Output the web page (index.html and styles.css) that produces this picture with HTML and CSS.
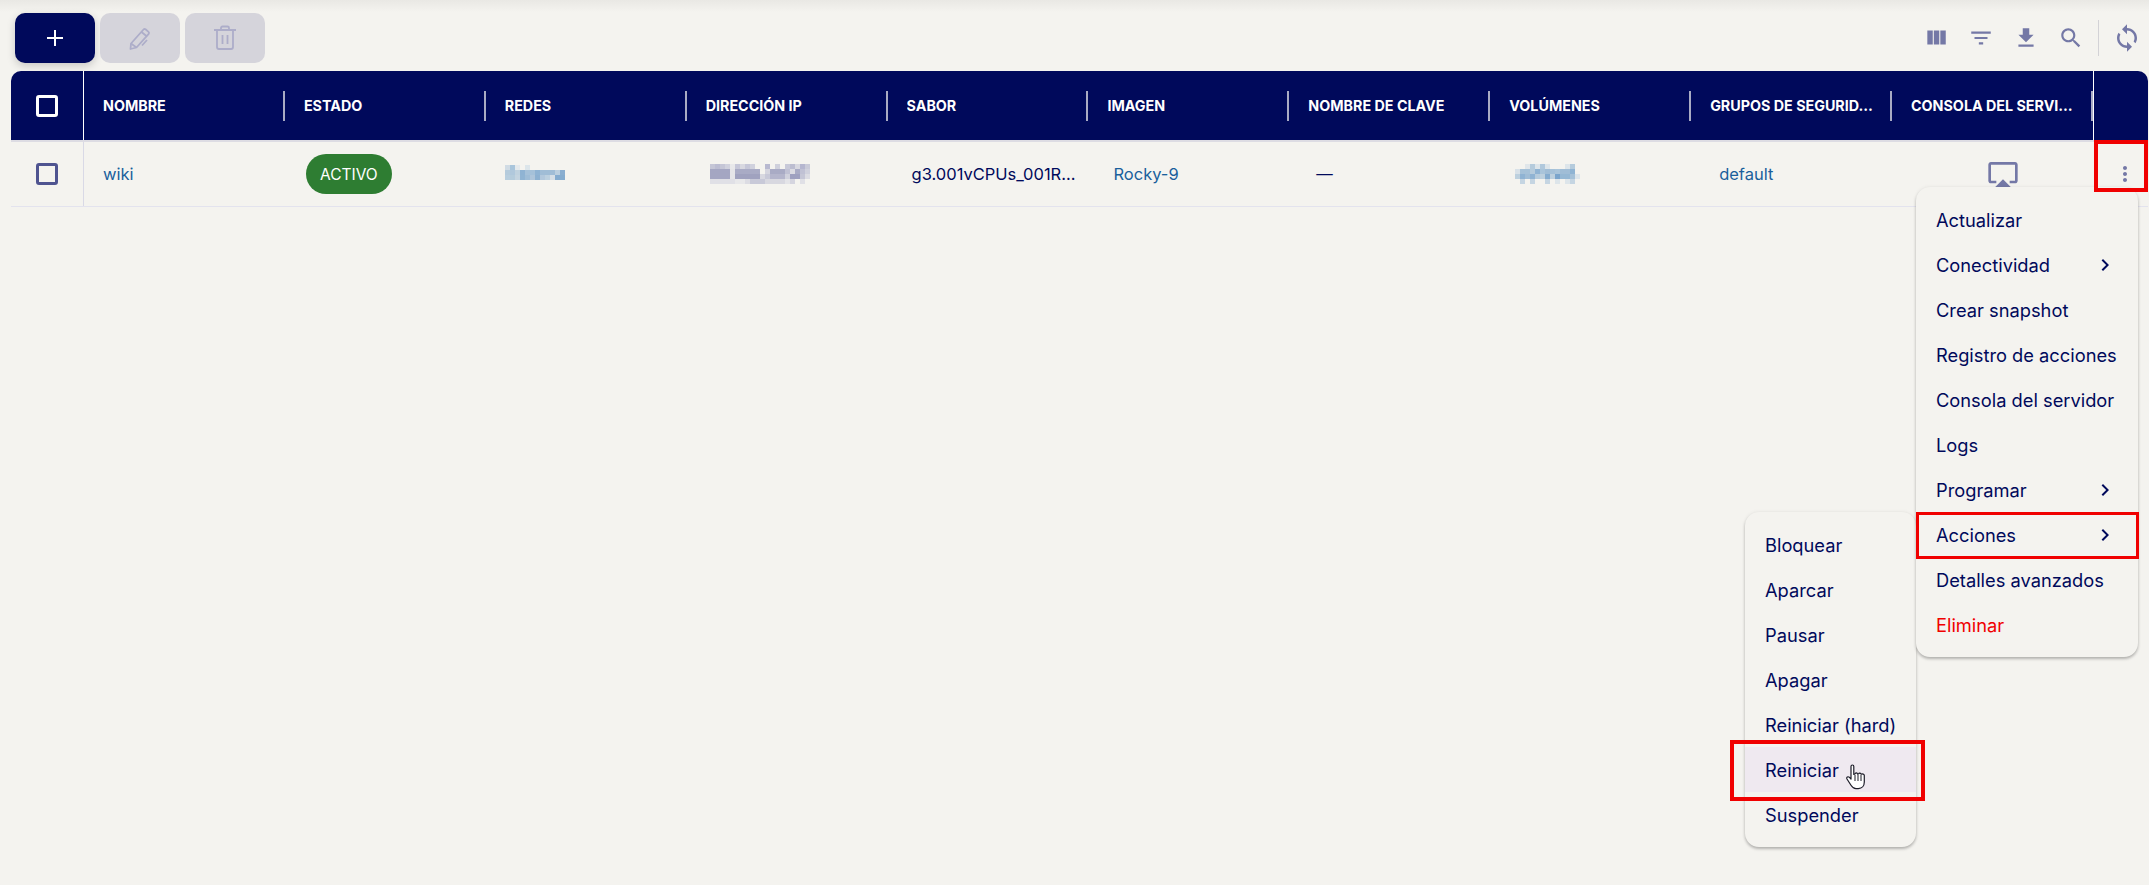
FILE: index.html
```html
<!DOCTYPE html>
<html lang="es">
<head>
  <meta charset="UTF-8">
  <meta name="viewport" content="width=device-width, initial-scale=1.0">
  <title>Instancias</title>
  <link rel="stylesheet" href="styles.css">
</head>
<body>
  <!-- Barra de acciones -->
  <div class="toolbar">
    <div class="toolbar-left">
      <button class="btn btn-primary">
        <svg width="24" height="24" viewBox="0 0 24 24"><path d="M12 4v16M4 12h16" stroke="#fff" stroke-width="2" fill="none"/></svg>
      </button>
      <button class="btn btn-disabled">
        <svg width="26" height="26" viewBox="0 0 26 26" fill="none" stroke="#adadc9" stroke-width="1.8" stroke-linejoin="round"><path d="M4 18.5 16.5 4.5a1.5 1.5 0 0 1 2-.2l3 2.6a1.5 1.5 0 0 1 .2 2L9.5 22.5 3.5 24z"/><path d="M4 18.5l5.5 4M14.5 7l5.500 4.500M15 20.500l5-5.500"/></svg>
      </button>
      <button class="btn btn-disabled">
        <svg width="26" height="26" viewBox="0 0 26 26" fill="none" stroke="#adadc9" stroke-width="1.8"><path d="M2 5h22M5 5v17a2 2 0 0 0 2 2h12a2 2 0 0 0 2-2V5M9 5V3a1.500 1.500 0 0 1 1.500-1.500h5A1.500 1.500 0 0 1 17 3v2M10.500 10v9M15.500 10v9"/></svg>
      </button>
    </div>
    <div class="toolbar-right">
      <svg class="tool tool-item" width="26" height="26" viewBox="0 0 24 24"><path d="M10 18h5V5h-5v13zm-6 0h5V5H4v13zM16 5v13h5V5h-5z"/></svg>
      <svg class="tool tool-item" width="26" height="26" viewBox="0 0 24 24"><path d="M10 18h4v-2h-4v2zM3 6v2h18V6H3zm3 7h12v-2H6v2z"/></svg>
      <svg class="tool tool-item" width="26" height="26" viewBox="0 0 24 24"><path d="M19 9h-4V3H9v6H5l7 7 7-7zM5 18v2h14v-2H5z"/></svg>
      <svg class="tool" width="26" height="26" viewBox="0 0 24 24"><path d="M15.500 14h-.79l-.28-.27C15.410 12.590 16 11.110 16 9.500 16 5.910 13.090 3 9.500 3S3 5.910 3 9.500 5.910 16 9.500 16c1.610 0 3.090-.59 4.230-1.570l.27.28v.79l5 4.990L20.490 19l-4.990-5zm-6 0C7.010 14 5 11.990 5 9.500S7.010 5 9.500 5 14 7.010 14 9.500 11.990 14 9.500 14z"/></svg>
      <span class="tool-divider"></span>
      <svg class="tool" width="30" height="30" viewBox="0 0 24 24"><path d="M12 4V1L8 5l4 4V6c3.310 0 6 2.690 6 6 0 1.010-.25 1.970-.7 2.800l1.460 1.460C19.540 15.030 20 13.570 20 12c0-4.420-3.580-8-8-8zm0 14c-3.310 0-6-2.690-6-6 0-1.010.25-1.970.7-2.800L5.240 7.740C4.460 8.970 4 10.430 4 12c0 4.420 3.580 8 8 8v3l4-4-4-4v3z"/></svg>
    </div>
  </div>

  <!-- Tabla -->
  <div class="table">
    <div class="row row-head">
      <div class="cell cell-check"><span class="checkbox checkbox-head"></span></div>
      <div class="cell"><span class="label">Nombre</span><span class="sep"></span></div>
      <div class="cell"><span class="label">Estado</span><span class="sep"></span></div>
      <div class="cell"><span class="label">Redes</span><span class="sep"></span></div>
      <div class="cell"><span class="label">Dirección IP</span><span class="sep"></span></div>
      <div class="cell"><span class="label">Sabor</span><span class="sep"></span></div>
      <div class="cell"><span class="label">Imagen</span><span class="sep"></span></div>
      <div class="cell"><span class="label">Nombre de clave</span><span class="sep"></span></div>
      <div class="cell"><span class="label">Volúmenes</span><span class="sep"></span></div>
      <div class="cell"><span class="label">Grupos de seguridad</span><span class="sep"></span></div>
      <div class="cell"><span class="label">Consola del servidor</span><span class="sep"></span></div>
      <div class="cell cell-actions"></div>
    </div>
    <div class="row row-body">
      <div class="cell cell-check"><span class="checkbox"></span></div>
      <div class="cell cell-name"><a href="#">wiki</a></div>
      <div class="cell cell-state"><span class="chip">ACTIVO</span></div>
      <!-- datos difuminados en la captura -->
      <div class="cell cell-net">
        <svg width="60" height="20" viewBox="0 0 60 20" shape-rendering="crispEdges">
          <rect x="0" y="1" width="5" height="5" fill="#d0dbe4"/><rect x="5" y="1" width="5" height="5" fill="#a9c5db"/><rect x="10" y="1" width="5" height="5" fill="#e4e9ec"/><rect x="20" y="1" width="5" height="5" fill="#dce5ea"/>
          <rect x="0" y="6" width="5" height="5" fill="#b5cbdc"/><rect x="5" y="6" width="5" height="5" fill="#b0c8dc"/><rect x="10" y="6" width="5" height="5" fill="#c0d2df"/><rect x="15" y="6" width="5" height="5" fill="#8fb3d3"/><rect x="20" y="6" width="10" height="5" fill="#a5c1d9"/><rect x="30" y="6" width="5" height="5" fill="#8fb3d3"/><rect x="35" y="6" width="15" height="5" fill="#a0bdd6"/><rect x="50" y="6" width="5" height="5" fill="#bbcfdf"/><rect x="55" y="6" width="5" height="5" fill="#8aaed0"/>
          <rect x="0" y="11" width="5" height="5" fill="#b8cede"/><rect x="5" y="11" width="5" height="5" fill="#b5ccdc"/><rect x="10" y="11" width="5" height="5" fill="#c4d4e0"/><rect x="15" y="11" width="5" height="5" fill="#90b4d3"/><rect x="20" y="11" width="5" height="5" fill="#9fbdd7"/><rect x="25" y="11" width="5" height="5" fill="#aec5da"/><rect x="30" y="11" width="5" height="5" fill="#8db1d1"/><rect x="35" y="11" width="5" height="5" fill="#b2c8dc"/><rect x="40" y="11" width="5" height="5" fill="#bcd0df"/><rect x="45" y="11" width="5" height="5" fill="#d6dfe6"/><rect x="50" y="11" width="10" height="5" fill="#85accf"/>
        </svg>
      </div>
      <div class="cell cell-ip">
        <svg width="100" height="20" viewBox="0 0 100 20" shape-rendering="crispEdges">
          <rect x="0" y="0" width="5" height="5" fill="#c5c6d6"/><rect x="5" y="0" width="5" height="5" fill="#bcbdd2"/><rect x="10" y="0" width="5" height="5" fill="#c5c6d6"/><rect x="15" y="0" width="5" height="5" fill="#d0d1dd"/><rect x="20" y="0" width="5" height="5" fill="#e8e8ea"/><rect x="25" y="0" width="5" height="5" fill="#c6c7d8"/><rect x="30" y="0" width="5" height="5" fill="#d8d8e0"/><rect x="35" y="0" width="5" height="5" fill="#c6c7d8"/><rect x="40" y="0" width="5" height="5" fill="#d0d1dd"/><rect x="55" y="0" width="5" height="5" fill="#b8b9d0"/><rect x="65" y="0" width="5" height="5" fill="#cfd0dc"/><rect x="75" y="0" width="5" height="5" fill="#c8c9d8"/><rect x="80" y="0" width="5" height="5" fill="#bcbdd0"/><rect x="85" y="0" width="5" height="5" fill="#d8d8e0"/><rect x="90" y="0" width="5" height="5" fill="#b5b6cf"/><rect x="95" y="0" width="5" height="5" fill="#c9cad8"/>
          <rect x="0" y="5" width="20" height="10" fill="#a4a6c2"/><rect x="20" y="5" width="5" height="10" fill="#e5e5e8"/><rect x="25" y="5" width="25" height="5" fill="#a9abc5"/><rect x="25" y="10" width="25" height="5" fill="#a0a2bf"/><rect x="55" y="5" width="5" height="5" fill="#d5d5df"/><rect x="60" y="5" width="15" height="5" fill="#a9abc5"/><rect x="75" y="5" width="5" height="5" fill="#c0c1d4"/><rect x="80" y="5" width="5" height="5" fill="#dcdce3"/><rect x="85" y="5" width="5" height="5" fill="#a9abc5"/><rect x="90" y="5" width="5" height="5" fill="#c0c1d4"/><rect x="95" y="5" width="5" height="5" fill="#d0d1dd"/>
          <rect x="50" y="10" width="5" height="5" fill="#d8d8e0"/><rect x="55" y="10" width="5" height="5" fill="#c8c9d8"/><rect x="60" y="10" width="15" height="5" fill="#b4b5cc"/><rect x="75" y="10" width="5" height="5" fill="#d0d1dd"/><rect x="80" y="10" width="10" height="5" fill="#9fa1c0"/><rect x="90" y="10" width="5" height="5" fill="#c5c6d6"/><rect x="95" y="10" width="5" height="5" fill="#dcdce3"/>
          <rect x="0" y="15" width="25" height="5" fill="#e0e0e6"/><rect x="25" y="15" width="10" height="5" fill="#e8e8ea"/><rect x="35" y="15" width="5" height="5" fill="#dcdce3"/><rect x="40" y="15" width="15" height="5" fill="#c8c9d8"/><rect x="55" y="15" width="20" height="5" fill="#d8d8e0"/><rect x="75" y="15" width="5" height="5" fill="#e4e4e8"/><rect x="80" y="15" width="5" height="5" fill="#d5d5df"/><rect x="90" y="15" width="5" height="5" fill="#e0e0e6"/>
        </svg>
      </div>
      <div class="cell"><span class="text">g3.001vCPUs_001R...</span></div>
      <div class="cell cell-link"><a href="#">Rocky-9</a></div>
      <div class="cell cell-dash"><span class="text">—</span></div>
      <div class="cell cell-vol">
        <svg width="65" height="20" viewBox="0 0 65 20" shape-rendering="crispEdges">
          <rect x="10" y="0" width="5" height="5" fill="#e0e6ea"/><rect x="15" y="0" width="5" height="5" fill="#b5cbdc"/><rect x="20" y="0" width="5" height="5" fill="#dde5ea"/><rect x="25" y="0" width="5" height="5" fill="#b0c8dc"/><rect x="30" y="0" width="5" height="5" fill="#dde5ea"/><rect x="50" y="0" width="5" height="5" fill="#dde5ea"/><rect x="55" y="0" width="5" height="5" fill="#b5cbdc"/>
          <rect x="0" y="5" width="5" height="5" fill="#d8e1e8"/><rect x="5" y="5" width="10" height="5" fill="#a5c1d8"/><rect x="15" y="5" width="5" height="5" fill="#b5cbdc"/><rect x="20" y="5" width="5" height="5" fill="#8fb3d3"/><rect x="25" y="5" width="5" height="5" fill="#a9c4da"/><rect x="30" y="5" width="5" height="5" fill="#a0bdd6"/><rect x="35" y="5" width="5" height="5" fill="#a5c1d8"/><rect x="40" y="5" width="5" height="5" fill="#a9c4da"/><rect x="45" y="5" width="10" height="5" fill="#a0bdd6"/><rect x="55" y="5" width="5" height="5" fill="#90b4d3"/>
          <rect x="0" y="10" width="5" height="5" fill="#bdd0de"/><rect x="5" y="10" width="5" height="5" fill="#8fb3d3"/><rect x="10" y="10" width="5" height="5" fill="#a0bdd6"/><rect x="15" y="10" width="5" height="5" fill="#8fb3d3"/><rect x="20" y="10" width="5" height="5" fill="#b5cbdc"/><rect x="25" y="10" width="5" height="5" fill="#bdd0de"/><rect x="30" y="10" width="5" height="5" fill="#85accf"/><rect x="35" y="10" width="5" height="5" fill="#bdd0de"/><rect x="40" y="10" width="5" height="5" fill="#7ba5cc"/><rect x="45" y="10" width="10" height="5" fill="#96b8d4"/><rect x="55" y="10" width="5" height="5" fill="#a5c1d8"/><rect x="60" y="10" width="5" height="5" fill="#dde5ea"/>
          <rect x="5" y="15" width="5" height="5" fill="#c5d5e2"/><rect x="15" y="15" width="5" height="5" fill="#c5d5e2"/><rect x="30" y="15" width="5" height="5" fill="#c5d5e2"/><rect x="40" y="15" width="5" height="5" fill="#dde5ea"/><rect x="50" y="15" width="5" height="5" fill="#dde5ea"/><rect x="55" y="15" width="5" height="5" fill="#c5d5e2"/>
        </svg>
      </div>
      <div class="cell cell-default"><a href="#">default</a></div>
      <div class="cell cell-console">
        <svg class="tool" width="32" height="32" viewBox="0 0 24 24"><path d="M6 22h12l-6-6-6 6zM21 3H3c-1.100 0-2 .9-2 2v12c0 1.100.9 2 2 2h4v-2H3V5h18v12h-4v2h4c1.100 0 2-.9 2-2V5c0-1.100-.9-2-2-2z"/></svg>
      </div>
      <div class="cell cell-actions">
        <svg class="tool" width="24" height="24" viewBox="0 0 24 24"><path d="M12 8c1.100 0 2-.9 2-2s-.9-2-2-2-2 .9-2 2 .9 2 2 2zm0 2c-1.100 0-2 .9-2 2s.9 2 2 2 2-.9 2-2-.9-2-2-2zm0 6c-1.100 0-2 .9-2 2s.9 2 2 2 2-.9 2-2-.9-2-2-2z"/></svg>
      </div>
    </div>
  </div>

  <!-- Submenu de acciones -->
  <div class="menu menu-sub">
    <div class="item">Bloquear</div>
    <div class="item">Aparcar</div>
    <div class="item">Pausar</div>
    <div class="item">Apagar</div>
    <div class="item">Reiniciar (hard)</div>
    <div class="item item-hover">Reiniciar</div>
    <div class="item">Suspender</div>
  </div>

  <!-- Menu principal -->
  <div class="menu menu-main">
    <div class="item">Actualizar</div>
    <div class="item">Conectividad<svg class="chevron" width="24" height="24" viewBox="0 0 24 24"><path d="M10 6L8.590 7.410 13.170 12l-4.580 4.590L10 18l6-6z"/></svg></div>
    <div class="item">Crear snapshot</div>
    <div class="item">Registro de acciones</div>
    <div class="item">Consola del servidor</div>
    <div class="item">Logs</div>
    <div class="item">Programar<svg class="chevron" width="24" height="24" viewBox="0 0 24 24"><path d="M10 6L8.590 7.410 13.170 12l-4.580 4.590L10 18l6-6z"/></svg></div>
    <div class="item">Acciones<svg class="chevron" width="24" height="24" viewBox="0 0 24 24"><path d="M10 6L8.590 7.410 13.170 12l-4.580 4.590L10 18l6-6z"/></svg></div>
    <div class="item">Detalles avanzados</div>
    <div class="item item-danger">Eliminar</div>
  </div>

  <!-- Marcas rojas de la captura -->
  <div class="mark mark-dots"></div>
  <div class="mark mark-actions"></div>
  <div class="mark mark-restart"></div>

  <!-- Cursor -->
  <svg class="hand" width="20" height="26" viewBox="0 0 20 26">
    <path d="M5 2.500c0-2 2.800-2 2.800 0v8l1.200-.5c.2-1.500 2.400-1.500 2.600.1l1-.2c.4-1.300 2.300-1.100 2.500.3l.9-.1c1-.5 2.300.2 2.300 1.500v6.500c0 3.500-2.200 6.500-6 6.500H10c-2.500 0-3.700-1.300-5-3.400L1 15c-.9-1.600 1-2.900 2.200-1.800L5 15z" fill="#fff" stroke="#1c1c28" stroke-width="1.200" stroke-linejoin="round"/>
    <path d="M9 11v6M12 11v6M15 11v6" stroke="#1c1c28" stroke-width="1"/>
  </svg>
</body>
</html>
```

FILE: styles.css
```css
* {
  box-sizing: border-box;
}
html, body {
  height: 100%;
}
body {
  margin: 0;
  background-color: #f4f3ef;
  background-image: linear-gradient(#e9e8e4, #f4f3ef 12px);
  background-repeat: no-repeat;
  font-family: Inter, "Liberation Sans", sans-serif;
  color: #00095b;
  overflow: hidden;
  position: relative;
}
a {
  color: #1a5f9c;
  text-decoration: none;
}

/* Barra de acciones */
.toolbar {
  display: flex;
  justify-content: space-between;
  align-items: center;
  height: 71px;
  padding: 5px 7px 0 15px;
}
.toolbar-left {
  display: flex;
  gap: 5px;
}
.btn {
  display: flex;
  align-items: center;
  justify-content: center;
  width: 80px;
  height: 50px;
  border: none;
  border-radius: 10px;
}
.btn-primary {
  background-color: #00095b;
  box-shadow: 0 3px 8px rgba(0, 0, 0, 0.18);
}
.btn-disabled {
  background-color: #d5d4db;
}
.toolbar-right {
  display: flex;
  align-items: center;
}
.tool {
  fill: #7478a6;
  flex: none;
}
.tool-item {
  margin-right: 19px;
}
.tool-divider {
  width: 1px;
  height: 36px;
  margin: 0 13px 0 14px;
  background-color: #d3d2d6;
}

/* Tabla */
.table {
  margin: 0 1px 0 11px;
}
.row {
  display: grid;
  grid-template-columns: 73px repeat(10, 200.9px) 1fr;
}
.row-head {
  height: 71px;
  background-color: #00095b;
  border-bottom: 2px solid #dddce3;
  border-radius: 10px 10px 0 0;
  color: #fff;
}
.row-body {
  height: 65px;
  border-bottom: 1px solid #e3e3ee;
  font-size: 16.5px;
}
.cell {
  display: flex;
  align-items: center;
  min-width: 0;
  padding-left: 24px;
}
.row-head .cell {
  padding-left: 19px;
}
.row-head .cell-check {
  padding-left: 0;
  border-right: 1px solid #fff;
}
.cell-check {
  justify-content: center;
  padding-left: 0;
  border-right: 1px solid #d9d9e6;
}
.row-head .cell-actions {
  border-left: 1px solid #fff;
  padding-left: 0;
}
.label {
  flex: 1;
  min-width: 0;
  font-size: 14.3px;
  font-weight: 700;
  text-transform: uppercase;
  white-space: nowrap;
  overflow: hidden;
  text-overflow: ellipsis;
  padding-right: 14px;
}
.sep {
  flex: none;
  width: 2px;
  height: 30px;
  background-color: #a9abc4;
}
.checkbox {
  display: block;
  width: 22px;
  height: 22px;
  border: 3px solid #4f5490;
  border-radius: 3px;
}
.checkbox-head {
  border-color: #fff;
}
.cell-name {
  padding-left: 19px;
}
.cell-state {
  padding-left: 21px;
}
.cell-net {
  padding-left: 19px;
}
.cell-ip {
  padding-left: 23px;
}
.cell-vol {
  padding-left: 25px;
}
.chip {
  display: flex;
  align-items: center;
  justify-content: center;
  width: 86px;
  height: 40px;
  border-radius: 20px;
  background-color: #2e7d32;
  color: #fff;
  font-size: 15.5px;
}
.cell-link {
  padding-left: 25px;
}
.cell-default {
  padding-left: 28px;
}
.cell-console {
  justify-content: center;
  padding-left: 22px;
}
.cell-actions {
  justify-content: center;
  padding-left: 9px;
}
.cell-dash {
  padding-left: 27px;
}

/* Menus */
.menu {
  position: absolute;
  padding: 10px 0;
  background-color: #f4f3ef;
  border-radius: 14px;
  box-shadow: 0 2px 3px rgba(0, 0, 0, 0.25), 0 0 4px rgba(0, 0, 0, 0.06);
  font-size: 18.3px;
}
.menu-main {
  top: 187px;
  left: 1916px;
  width: 222px;
}
.menu-sub {
  top: 512px;
  left: 1745px;
  width: 171px;
}
.item {
  display: flex;
  align-items: center;
  justify-content: space-between;
  height: 45px;
  padding: 0 20px;
  white-space: nowrap;
}
.item-hover {
  background-color: #efe9f0;
}
.item-danger {
  color: #f00000;
}
.chevron {
  fill: #00095b;
  margin-right: 1px;
}

/* Marcas rojas */
.mark {
  position: absolute;
  border: 4px solid #f00000;
}
.mark-dots {
  top: 140px;
  left: 2094px;
  width: 54px;
  height: 52px;
}
.mark-actions {
  top: 512px;
  left: 1916px;
  width: 223px;
  height: 47px;
  border-width: 3px;
}
.mark-restart {
  top: 740px;
  left: 1730px;
  width: 195px;
  height: 61px;
}
.hand {
  position: absolute;
  top: 764px;
  left: 1846px;
}
```
